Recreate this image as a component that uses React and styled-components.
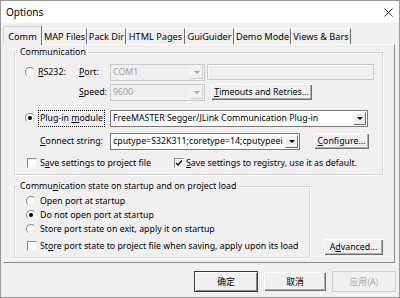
import React from "react";
import styled, { createGlobalStyle } from "styled-components";

const GlobalStyle = createGlobalStyle`
  html, body { margin: 0; padding: 0; background: #ffffff; }
  body {
    font-family: "Noto Sans", "Noto Sans CJK SC", sans-serif;
    font-size: 8.8px;
    color: #000;
  }
  * { box-sizing: border-box; }
`;

const Window = styled.div`
  width: 400px;
  height: 298px;
  border: 1px solid #9a9a9a;
  background: #f0f0f0;
  display: flex;
  flex-direction: column;
  overflow: hidden;
`;

const TitleBar = styled.div`
  height: 22px;
  flex-shrink: 0;
  background: #fff;
  display: flex;
  align-items: center;
  justify-content: space-between;
  padding: 0 6px 0 5px;
  font-size: 10px;
`;

const TabStrip = styled.div`
  display: flex;
  align-items: flex-end;
  height: 21px;
  margin-left: 2px;
`;

const Tab = styled.div`
  width: ${(p) => p.$w}px;
  height: ${(p) => (p.$active ? 19 : 16)}px;
  display: flex;
  align-items: center;
  justify-content: center;
  white-space: nowrap;
  font-size: 9.2px;
  border-top: 1px solid ${(p) => (p.$active ? "#d4d4d4" : "#fbfbfb")};
  border-left: 1px solid ${(p) => (p.$active ? "#d4d4d4" : "#fbfbfb")};
  border-right: 1px solid #6d6d6d;
  background: #f0f0f0;
  margin-bottom: ${(p) => (p.$active ? -1 : 0)}px;
  position: relative;
  z-index: ${(p) => (p.$active ? 1 : 0)};
`;

const Panel = styled.div`
  height: 219px;
  margin: 0 4px 0 2px;
  border: 1px solid;
  border-color: #fdfdfd #8c8c8c #8c8c8c #fdfdfd;
  padding: 1px 0 0 10px;
  display: flex;
  flex-direction: column;
`;

const Group = styled.fieldset`
  margin: 0;
  padding: 0 0 ${(p) => p.$pb}px 0;
  width: ${(p) => p.$w}px;
  min-width: 0;
  border: 1px solid #d6d6d6;
  box-shadow: inset 1px 1px 0 #fff, 1px 1px 0 #fff;
  display: flex;
  flex-direction: column;
`;

const Legend = styled.legend`
  padding: 0 2px;
  margin-left: 3px;
  line-height: 13px;
`;

const Row = styled.div`
  display: flex;
  align-items: center;
  height: ${(p) => p.$h || 18}px;
  margin-top: ${(p) => p.$mt || 0}px;
`;

const Slot = styled.div`
  width: ${(p) => p.$w}px;
  flex-shrink: 0;
  display: flex;
  align-items: center;
  white-space: nowrap;
  padding-left: ${(p) => p.$pl || 0}px;
  color: ${(p) => (p.$disabled ? "#a0a0a0" : "#000")};
`;

const Focus = styled.span`
  outline: 1px dotted #000;
  outline-offset: 0;
  padding: 1px 1px;
  line-height: 13px;
`;

const U = styled.span`
  text-decoration: underline;
  text-underline-offset: 1px;
`;

const RadioDot = styled.span`
  width: 10px;
  height: 10px;
  margin-left: ${(p) => p.$ml || 0}px;
  border-radius: 50%;
  border: 1px solid;
  border-color: #8a8a8a #e6e6e6 #e6e6e6 #8a8a8a;
  background: #fff;
  display: flex;
  align-items: center;
  justify-content: center;
  flex-shrink: 0;
  &::after {
    content: "";
    width: 4px;
    height: 4px;
    border-radius: 50%;
    background: ${(p) => (p.$on ? "#000" : "transparent")};
  }
`;

const CheckBox = styled.span`
  width: 10px;
  height: 10px;
  margin-left: ${(p) => p.$ml || 0}px;
  border: 1px solid;
  border-color: #8a8a8a #f4f4f4 #f4f4f4 #8a8a8a;
  background: #fff;
  display: flex;
  align-items: center;
  justify-content: center;
  flex-shrink: 0;
`;

const Combo = styled.div`
  width: ${(p) => p.$w}px;
  height: ${(p) => p.$h || 17}px;
  flex-shrink: 0;
  display: flex;
  align-items: stretch;
  border: 1px solid ${(p) => (p.$disabled ? "#c8c8c8" : "#7a7a7a")};
  background: ${(p) => (p.$disabled ? "#f0f0f0" : "#fff")};
  color: ${(p) => (p.$disabled ? "#a0a0a0" : "#000")};
`;

const ComboText = styled.div`
  flex: 1;
  min-width: 0;
  overflow: hidden;
  white-space: nowrap;
  padding-left: 2px;
  display: flex;
  align-items: center;
`;

const DropButton = styled.div`
  width: 13px;
  margin: 1px;
  display: flex;
  align-items: center;
  justify-content: center;
  background: #f0f0f0;
  border: 1px solid;
  border-color: ${(p) => (p.$disabled ? "#f6f6f6 #d0d0d0 #d0d0d0 #f6f6f6" : "#fff #6d6d6d #6d6d6d #fff")};
  &::after {
    content: "";
    border-left: 3px solid transparent;
    border-right: 3px solid transparent;
    border-top: 3px solid ${(p) => (p.$disabled ? "#a8a8a8" : "#000")};
  }
`;

const Edit = styled.div`
  width: ${(p) => p.$w}px;
  height: 16px;
  flex-shrink: 0;
  border: 1px solid #c8c8c8;
  box-shadow: inset 1px 1px 0 #fff;
  background: #f0f0f0;
`;

const Button = styled.div`
  width: ${(p) => p.$w}px;
  height: ${(p) => p.$h || 18}px;
  flex-shrink: 0;
  display: flex;
  align-items: center;
  justify-content: center;
  white-space: nowrap;
  background: #f0f0f0;
  border: 1px solid ${(p) => (p.$default ? "#3a3a3a" : "transparent")};
  box-shadow: ${(p) =>
    p.$default
      ? "inset 1px 1px 0 #fff, inset -1px -1px 0 #8a8a8a"
      : "inset 1px 1px 0 #fff, inset -1px -1px 0 #6d6d6d, inset -2px -2px 0 #b0b0b0"};
  color: ${(p) => (p.$disabled ? "#a8a8a8" : "#000")};
  font-family: ${(p) => (p.$cjk ? '"Noto Sans CJK SC", sans-serif' : "inherit")};
  ${(p) => (p.$disabled ? "border-color: #cfcfcf; box-shadow: none;" : "")}
`;

const LowerRow = styled.div`
  display: flex;
  align-items: flex-end;
  margin-top: 5px;
`;

const Footer = styled.div`
  display: flex;
  justify-content: flex-end;
  gap: 5px;
  margin: 8px 3px 0 0;
`;

const Close = () => (
  <svg width="9" height="9" viewBox="0 0 9 9">
    <path d="M0.5 0.5 L8.5 8.5 M8.5 0.5 L0.5 8.5" stroke="#222" strokeWidth="0.9" fill="none" />
  </svg>
);

const Tick = () => (
  <svg width="8" height="8" viewBox="0 0 8 8">
    <path d="M1 4 L3 6 L7 1.5" stroke="#000" strokeWidth="1.4" fill="none" />
  </svg>
);

const tabs = [
  ["Comm", 39],
  ["MAP Files", 45],
  ["Pack Dir", 39],
  ["HTML Pages", 59],
  ["GuiGuider", 49],
  ["Demo Mode", 57],
  ["Views & Bars", 60],
];

export default function App() {
  return (
    <>
      <GlobalStyle />
      <Window>
        <TitleBar>
          <span>Options</span>
          <Close />
        </TitleBar>

        <TabStrip>
          {tabs.map(([t, w], i) => (
            <Tab key={t} $w={w} $active={i === 0}>
              {t}
            </Tab>
          ))}
        </TabStrip>

        <Panel>
          <Group $w={369} $pb={4}>
            <Legend>Communication</Legend>
            <Row $mt={4}>
              <Slot $w={23}>
                <RadioDot $ml={10} />
              </Slot>
              <Slot $w={41}>
                <U>R</U>S232:
              </Slot>
              <Slot $w={31}>
                <U>P</U>ort:
              </Slot>
              <Combo $w={95} $disabled>
                <ComboText>COM1</ComboText>
                <DropButton $disabled />
              </Combo>
              <Slot $w={2} />
              <Edit $w={167} />
            </Row>
            <Row $mt={2}>
              <Slot $w={64} />
              <Slot $w={31}>
                <U>S</U>peed:
              </Slot>
              <Combo $w={95} $disabled>
                <ComboText>9600</ComboText>
                <DropButton $disabled />
              </Combo>
              <Slot $w={5} />
              <Button $w={103}>
                <U>T</U>imeouts and Retries...
              </Button>
            </Row>
            <Row $mt={8}>
              <Slot $w={24}>
                <RadioDot $ml={10} $on />
              </Slot>
              <Slot $w={71}>
                <Focus>
                  Plug-in <U>m</U>odule
                </Focus>
              </Slot>
              <Combo $w={258}>
                <ComboText>FreeMASTER Segger/JLink Communication Plug-in</ComboText>
                <DropButton />
              </Combo>
            </Row>
            <Row $mt={5}>
              <Slot $w={25} />
              <Slot $w={70}>
                <U>C</U>onnect string:
              </Slot>
              <Combo $w={190}>
                <ComboText>cputype=S32K311;coretype=14;cputypeei</ComboText>
                <DropButton />
              </Combo>
              <Slot $w={13} />
              <Button $w={57}>
                <U>C</U>onfigure...
              </Button>
            </Row>
            <Row $mt={6} $h={14}>
              <Slot $w={25}>
                <CheckBox $ml={12} />
              </Slot>
              <Slot $w={134}>
                S<U>a</U>ve settings to project file
              </Slot>
              <CheckBox>
                <Tick />
              </CheckBox>
              <Slot $w={180} $pl={2}>
                <U>S</U>ave settings to registry, use it as default.
              </Slot>
            </Row>
          </Group>

          <LowerRow>
            <Group $w={296} $pb={4}>
              <Legend>
                Commu<U>n</U>ication state on startup and on project load
              </Legend>
              <Row $h={14} $mt={1}>
                <Slot $w={25}>
                  <RadioDot $ml={11} />
                </Slot>
                <Slot $w={200}>Open port at startup</Slot>
              </Row>
              <Row $h={14}>
                <Slot $w={25}>
                  <RadioDot $ml={11} $on />
                </Slot>
                <Slot $w={200}>Do not open port at startup</Slot>
              </Row>
              <Row $h={14}>
                <Slot $w={25}>
                  <RadioDot $ml={11} />
                </Slot>
                <Slot $w={220}>Store port state on exit, apply it on startup</Slot>
              </Row>
              <Row $h={14} $mt={3}>
                <Slot $w={25}>
                  <CheckBox $ml={12} />
                </Slot>
                <Slot $w={265}>
                  St<U>o</U>re port state to project file when saving, apply upon its load
                </Slot>
              </Row>
            </Group>
            <Slot $w={13} />
            <Button $w={61} $h={18} style={{ marginBottom: 2 }}>
              A<U>d</U>vanced...
            </Button>
          </LowerRow>
        </Panel>

        <Footer>
          <Button $w={64} $h={21} $default $cjk>
            确定
          </Button>
          <Button $w={64} $h={21} $cjk>
            取消
          </Button>
          <Button $w={64} $h={21} $cjk $disabled>
            应用(A)
          </Button>
        </Footer>
      </Window>
    </>
  );
}
